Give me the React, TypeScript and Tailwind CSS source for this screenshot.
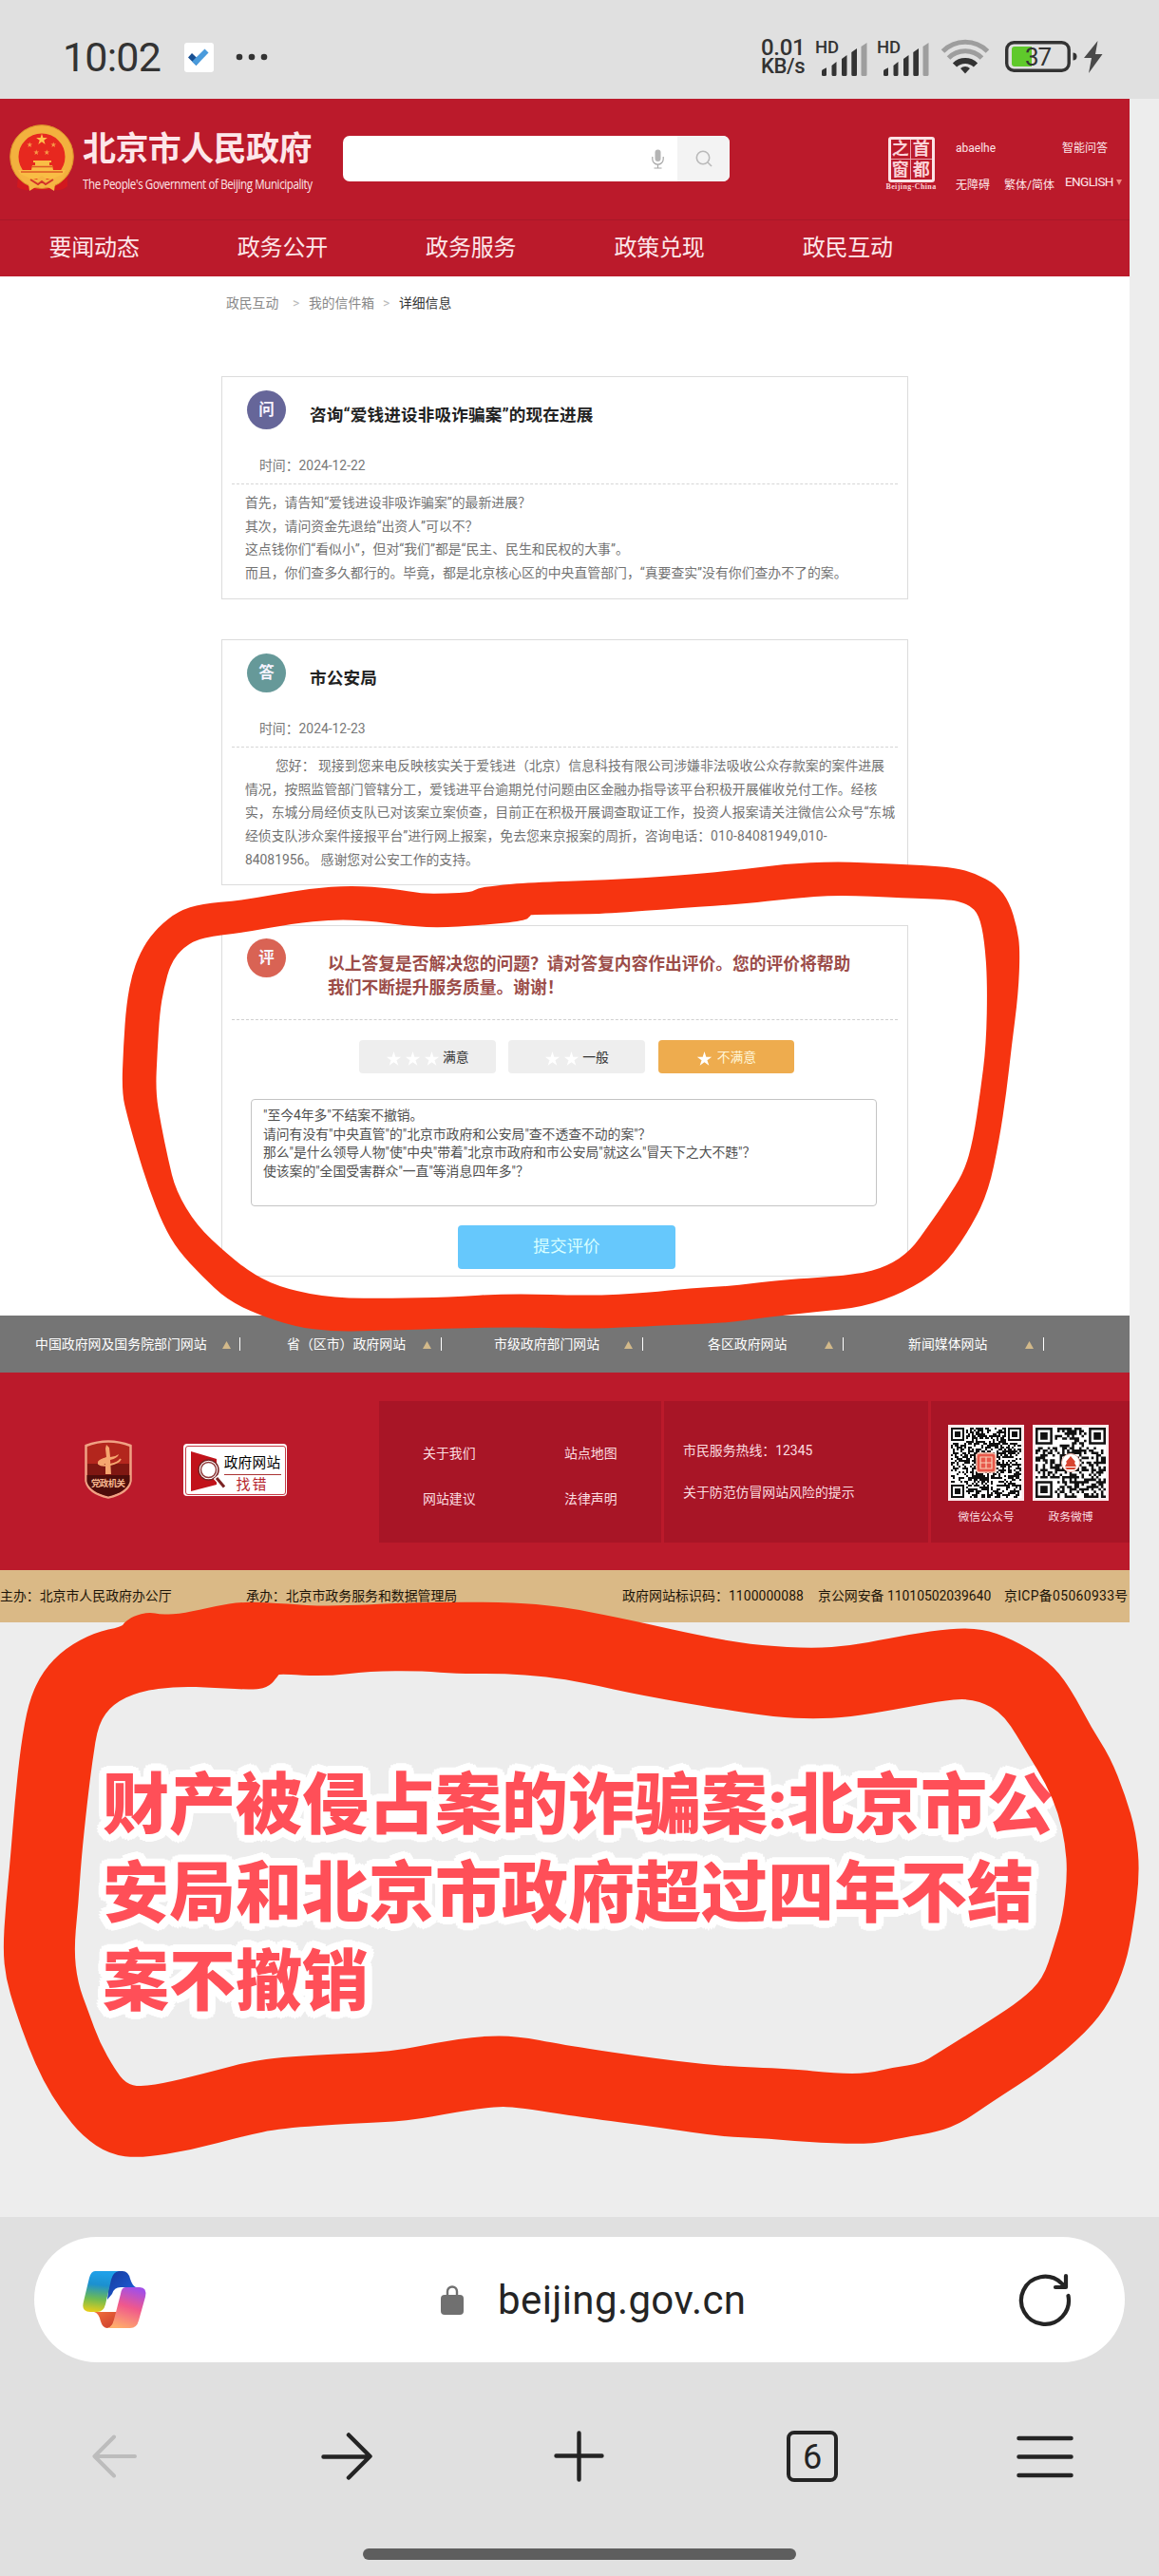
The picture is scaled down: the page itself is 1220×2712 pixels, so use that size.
import React from "react";

type Pt = [number, number];

const STAR = "M12 1.5l2.6 7.9h8.3l-6.7 4.9 2.6 7.9L12 17.3l-6.8 4.9 2.6-7.9L1.1 9.4h8.3z";

/* Smooth closed curve through the midpoints of a point list. */
function smooth(pts: Pt[]): string {
  const mid = (a: Pt, b: Pt): Pt => [(a[0] + b[0]) / 2, (a[1] + b[1]) / 2];
  const start = mid(pts[pts.length - 1], pts[0]);
  let d = `M${start[0]} ${start[1]}`;
  pts.forEach((p, i) => {
    const m = mid(p, pts[(i + 1) % pts.length]);
    d += `Q${p[0]} ${p[1]} ${m[0]} ${m[1]}`;
  });
  return d + "Z";
}

const RING1_OUT: Pt[] = [
  [602, 118], [612, 106], [640, 97], [700, 87], [830, 79], [950, 66], [1040, 50], [1130, 29], [1215, 21], [1310, 28], [1410, 38], [1450, 58], [1487, 95], [1508, 150], [1521, 230], [1526, 300],
  [1523, 440], [1512, 600], [1503, 750], [1491, 900], [1472, 1070], [1436, 1200], [1392, 1310], [1330, 1382], [1260, 1429], [1180, 1444], [1100, 1460],
  [1030, 1479], [952, 1483], [877, 1492], [784, 1497], [680, 1491], [512, 1498], [430, 1504], [368, 1505], [306, 1491], [243, 1452],
  [190, 1405], [148, 1330], [108, 1250], [83, 1170], [58, 1050], [38, 930], [23, 830], [13, 750], [16, 600], [21, 470], [31, 370],
  [49, 290], [74, 228], [108, 178], [148, 154], [210, 145], [270, 125], [330, 107], [400, 96], [470, 107], [520, 123], [560, 122],
];
const RING1_IN: Pt[] = [
  [702, 188], [702, 192], [692, 208], [620, 222], [540, 231], [480, 221], [430, 208], [370, 204], [300, 217], [220, 245], [148, 260], [118, 290], [96, 340], [84, 420],
  [77, 500], [73, 620], [70, 750], [79, 850], [91, 960], [104, 1060], [139, 1170], [190, 1260], [238, 1330], [290, 1372], [370, 1400],
  [470, 1400], [560, 1397], [670, 1385], [800, 1393], [900, 1383], [970, 1368], [1040, 1362], [1120, 1343], [1250, 1327], [1302, 1300],
  [1342, 1250], [1372, 1170], [1402, 1090], [1432, 1000], [1447, 900], [1459, 750], [1469, 600], [1471, 400], [1466, 270], [1457, 190], [1440, 157],
  [1410, 141], [1330, 137], [1220, 126], [1140, 138], [1060, 155], [960, 167], [830, 186], [770, 188],
];
const RING2_OUT: Pt[] = [
  [165, 82], [168, 72], [180, 55], [202, 43], [218, 51], [250, 46], [290, 28], [330, 15], [390, 22], [440, 28], [500, 23], [570, 17], [690, 17], [760, 29], [840, 59],
  [910, 90], [970, 115], [1030, 133], [1100, 140], [1150, 133], [1200, 115], [1260, 93], [1310, 85], [1347, 97], [1392, 140], [1427, 190],
  [1452, 260], [1476, 350], [1502, 430], [1522, 530], [1537, 630], [1542, 740], [1533, 880], [1523, 980], [1502, 1080], [1471, 1160],
  [1411, 1260], [1340, 1350], [1302, 1402], [1270, 1427], [1220, 1443], [1180, 1460], [1110, 1457], [1040, 1446], [970, 1439], [900, 1418],
  [800, 1392], [740, 1375], [700, 1362], [670, 1360], [620, 1374], [550, 1399], [480, 1405], [380, 1418], [330, 1438], [260, 1475],
  [190, 1498], [148, 1487], [112, 1440], [83, 1370], [58, 1290], [38, 1200], [20, 1100], [8, 1020], [4, 940], [8, 820], [14, 700],
  [20, 550], [28, 400], [39, 280], [58, 200], [88, 140], [128, 98],
];
const RING2_IN: Pt[] = [
  [378, 208], [376, 213], [365, 241], [346, 251], [290, 245], [240, 241], [188, 255], [153, 288], [133, 340], [125, 440], [118, 550], [110, 700], [106, 820], [100, 940],
  [105, 1030], [120, 1110], [135, 1190], [155, 1260], [170, 1298], [190, 1308], [230, 1295], [290, 1265], [340, 1239], [380, 1229],
  [440, 1222], [530, 1214], [590, 1190], [650, 1172], [700, 1172], [760, 1195], [860, 1225], [970, 1252], [1070, 1260], [1130, 1272],
  [1175, 1272], [1210, 1255], [1245, 1246], [1267, 1220], [1340, 1130], [1382, 1075], [1411, 1020], [1426, 930], [1438, 850],
  [1444, 740], [1441, 660], [1432, 580], [1415, 500], [1390, 420], [1375, 370], [1360, 325], [1340, 293], [1310, 273], [1270, 281],
  [1210, 303], [1150, 323], [1100, 328], [1050, 323], [970, 300], [870, 266], [790, 232], [740, 215], [680, 207], [620, 208], [570, 200],
  [500, 201], [440, 215],
];

function Scribbles() {
  return (
    <svg className="pointer-events-none absolute inset-0" width="1220" height="2712" viewBox="0 0 1220 2712" fill="#f63410" fillRule="evenodd">
      <path transform="translate(120 900) scale(0.625 0.33333)" d={smooth(RING1_OUT) + smooth(RING1_IN)} />
      <path transform="translate(0 1680) scale(0.7781 0.3954)" d={smooth(RING2_OUT) + smooth(RING2_IN)} />
    </svg>
  );
}

function Signal() {
  return (
    <div className="relative h-[40px] w-[55px] text-[#333]">
      <span className="absolute left-0 top-0 text-[18.5px] font-medium leading-[18px] tracking-[-0.2px]">HD</span>
      <svg className="absolute left-[6px] top-[3px]" width="49" height="37" viewBox="0 0 49 37" fill="#333">
        <path d="M1 34.5V31q0-1 1-1.800l4-2V34.500q0 1.500-1.500 1.500H2.500Q1 36 1 34.500z" />
        <path d="M11.500 34.500V25l5-4V34.500q0 1.500-1.500 1.500h-2q-1.500 0-1.500-1.500zM22 34.500V18l5.500-4V34.500q0 1.500-1.500 1.500h-2.500Q22 36 22 34.500zM32.300 34.500V11l5.700-4V34.500q0 1.500-1.500 1.500h-2.700q-1.500 0-1.500-1.500z" />
        <path fill="#9e9e9e" d="M42.500 34.500V5l6-4V34.500q0 1.500-1.500 1.500h-3q-1.500 0-1.500-1.500z" />
      </svg>
    </div>
  );
}

function StatusBar() {
  return (
    <header className="flex h-[104px] bg-[#e0e0e0] text-[#333]">
      <div className="ml-[66px] mt-[35px] w-[128px] whitespace-nowrap text-[43px] leading-[50px] tracking-[-0.8px]">10:02</div>
      <svg className="mt-[45px]" width="31" height="31" viewBox="0 0 31 31">
        <rect width="31" height="31" rx="3" fill="#fff" />
        <path d="M8 11l-4 4.500 8.500 8.500 4-5z" fill="#174f92" />
        <path d="M12.500 24l-4.300-4.300L21.500 6.500l4 4z" fill="#4a9bdc" />
      </svg>
      <svg className="ml-[23px] mt-[55px]" width="36" height="10" viewBox="0 0 36 10" fill="#333">
        <circle cx="4" cy="5" r="3.300" /><circle cx="17" cy="5" r="3.300" /><circle cx="30" cy="5" r="3.300" />
      </svg>
      <div className="ml-[517px] mt-[40px] w-[57px] whitespace-nowrap font-medium">
        <div className="text-[24px] leading-[20px] tracking-[-0.3px]">0.01</div>
        <div className="text-[22px] leading-[20px] tracking-[-0.4px]">KB/s</div>
      </div>
      <div className="mt-[41px] flex gap-[10px]"><Signal /><Signal /></div>
      <svg className="ml-[12px] mt-[41px]" width="52" height="38" viewBox="0 0 52 38" fill="none" strokeWidth="5">
        <path d="M2.500 13a33 33 0 0 1 47 0" stroke="#9e9e9e" />
        <path d="M8.500 20a24.500 24.500 0 0 1 35 0" stroke="#9e9e9e" />
        <path d="M15 27.500a15.500 15.500 0 0 1 22 0" stroke="#333" strokeWidth="6" />
        <path d="M26 36.500l-5-5.500a7.500 7.500 0 0 1 10 0z" fill="#333" />
      </svg>
      <div className="relative ml-[16px] mt-[43px] h-[34px] w-[76px]">
        <svg width="76" height="34" viewBox="0 0 76 34">
          <rect x="1.700" y="1.700" width="65.500" height="29.500" rx="7.500" fill="none" stroke="#333" strokeWidth="3.400" />
          <path d="M10 6h18v21H10q-3 0-3-3V9q0-3 3-3z" fill="#5fc92b" />
          <path d="M71.500 12.500q4 0 4 4t-4 4z" fill="#333" />
        </svg>
        <span className="absolute left-[21px] top-[3px] text-[26px] leading-[28px] tracking-[-1px]">37</span>
      </div>
      <svg className="ml-[6px] mt-[43px]" width="22" height="34" viewBox="0 0 22 34" fill="#4a4a4a">
        <path d="M15.500 0L1 18h8L6 34 20.500 14H13z" />
      </svg>
    </header>
  );
}

function Emblem() {
  return (
    <svg className="ml-[10px] mt-[27px] shrink-0" width="68" height="72" viewBox="0 0 68 72">
      <path d="M9 54L8 66q6 4 12 3l28 0q8 1 13-4l0-11z" fill="#d2181f" />
      <circle cx="34" cy="34" r="29" fill="#e7281f" stroke="#f3b13e" strokeWidth="9" />
      <circle cx="34" cy="34" r="33.300" fill="none" stroke="#d98c28" strokeWidth="1" />
      <path transform="translate(27.500 9) scale(.54)" d={STAR} fill="#ffc24d" />
      <path transform="translate(18 18) scale(.27)" d={STAR} fill="#f79a47" />
      <path transform="translate(43 18) scale(.27)" d={STAR} fill="#f79a47" />
      <path transform="translate(25 26) scale(.27)" d={STAR} fill="#f79a47" />
      <path transform="translate(36 26) scale(.27)" d={STAR} fill="#f79a47" />
      <path d="M25 38h19v2h-2v3h3l1 5h13q-3 8-13 9H22q-10-1-13-9h14l1-5h3v-3h-2z" fill="#f9bd45" />
      <path d="M12 50h44M23 44.500h22" stroke="#dd5a25" strokeWidth="1.500" />
      <path d="M10 52q12 4 16 8l8-6 8 6q4-4 16-8-2 9-10 11l-1 7-8-5q-5 4-10 0l-8 5-1-7q-8-2-10-11z" fill="#f6b443" />
      <path d="M22 58l8 5 4-3 4 3 8-5" fill="none" stroke="#d2332a" strokeWidth="2" />
    </svg>
  );
}

function Seal() {
  return (
    <div className="ml-[163px] mt-[40px] w-[56px] shrink-0">
      <div className="mx-auto grid h-[48px] w-[49px] grid-cols-2 grid-rows-2 place-items-center rounded-[3px] border-[3px] border-[#fde3e6] font-['Liberation_Serif','Noto_Sans_CJK_SC',serif] text-[18px] font-bold leading-[20px] text-[#fbd3d8]">
        <span className="flex h-full w-full items-center justify-center border-b border-r border-[#f0a5ae]">之</span>
        <span className="flex h-full w-full items-center justify-center border-b border-[#f0a5ae]">首</span>
        <span className="flex h-full w-full items-center justify-center border-r border-[#f0a5ae]">窗</span>
        <span>都</span>
      </div>
      <div className="mt-[1px] whitespace-nowrap text-center font-['Liberation_Serif',serif] text-[8px] font-bold leading-[8px] tracking-[0.4px] text-[#fbd3d8]">Beijing-China</div>
    </div>
  );
}

function SiteHeader() {
  const nav = ["要闻动态", "政务公开", "政务服务", "政策兑现", "政民互动"];
  return (
    <div className="h-[187px] bg-[#bb1a2b] text-[#fde6e9]">
      <div className="flex h-[127px]">
        <Emblem />
        <div className="ml-[9px] mt-[33px] w-[265px] shrink-0 whitespace-nowrap">
          <div className="text-[35px] font-bold leading-[42px] tracking-[-0.6px]">北京市人民政府</div>
          <div className="mt-[6px] origin-left scale-x-[0.85] font-['Open_Sans',sans-serif] text-[13.600px] leading-[18px] tracking-[-0.45px]">The People's Government of Beijing Municipality</div>
        </div>
        <div className="ml-[9px] mt-[39px] flex h-[48px] w-[407px] shrink-0 overflow-hidden rounded-[7px] bg-white">
          <svg className="ml-[325px] mt-[14px]" width="13" height="21" viewBox="0 0 13 21" fill="none" stroke="#a8a8a8" strokeWidth="1.200">
            <rect x="3.500" y="0.600" width="6" height="12.500" rx="3" fill="#b4b4b4" stroke="none" />
            <path d="M.8 8v2.500a5.700 5.700 0 0 0 11.400 0V8M6.500 16v3.500M2.500 20h8" />
          </svg>
          <div className="ml-[14px] flex flex-1 items-center justify-center bg-[#f3f3f3]">
            <svg width="18" height="18" viewBox="0 0 18 18" fill="none" stroke="#b9b9b9" strokeWidth="1.600">
              <circle cx="8" cy="8" r="6.700" /><path d="M13 13l4 4" />
            </svg>
          </div>
        </div>
        <Seal />
        <div className="ml-[19px] mt-[43px] w-[183px] shrink-0 whitespace-nowrap text-[12px] leading-[18px]">
          <div className="flex">
            <span className="w-[112px]">abaelhe</span><span>智能问答</span>
          </div>
          <div className="mt-[17px] flex">
            <span className="mt-[4px] w-[51px]">无障碍</span>
            <span className="mt-[4px] w-[64px]">繁体/简体</span>
            <span className="w-[54px] text-[13.500px] tracking-[-0.6px]">ENGLISH</span>
            <svg className="mt-[7px]" width="6" height="6" viewBox="0 0 6 6"><path d="M0 0h6L3 6z" fill="#f08a80" /></svg>
          </div>
        </div>
      </div>
      <nav className="flex h-[60px] border-t border-[#a81828] text-[24px]">
        {nav.map((n) => (
          <div key={n} className="w-[198.300px] pl-[51.500px] leading-[59px] tracking-[-0.2px]">{n}</div>
        ))}
      </nav>
    </div>
  );
}

function Dot({ children, color }: { children: string; color: string }) {
  return (
    <div className={"flex h-[41px] w-[41px] shrink-0 items-center justify-center rounded-full text-[16.500px] font-bold leading-[20px] text-[#f6f3ff] " + color}>
      {children}
    </div>
  );
}

function Post({ dot, color, title, date, className, children }: { dot: string; color: string; title: string; date: string; className: string; children: React.ReactNode }) {
  return (
    <section className={"ml-[233px] w-[723px] border border-[#dcdcdc] px-[10px] pt-[14px] " + className}>
      <div className="flex h-[54px] pl-[16px]">
        <Dot color={color}>{dot}</Dot>
        <h2 className="ml-[25px] mt-[13px] whitespace-nowrap text-[17.600px] font-bold leading-[26px] tracking-[0.150px] text-[#222]">{title}</h2>
      </div>
      <div className="mt-[14px] h-[31px] border-b border-dashed border-[#d6d6d6] pl-[29px] text-[13.870px] leading-[22px] text-[#777]">时间：{date}</div>
      <div className="mt-[7px] whitespace-nowrap pl-[14px] text-[13.870px] leading-[24.700px] text-[#727272]">{children}</div>
    </section>
  );
}

function Stars({ n }: { n: number }) {
  return (
    <>
      {Array.from({ length: n }, (_, i) => (
        <svg key={i} className="mr-[3px] mt-[4px]" width="17" height="17" viewBox="0 0 24 24"><path d={STAR} fill="#fff" /></svg>
      ))}
    </>
  );
}

function Review() {
  const btn = "flex h-[35px] w-[143.500px] items-center justify-center rounded-[4px] text-[13.800px] leading-[20px] ";
  return (
    <section className="ml-[233px] mt-[42px] h-[370px] w-[723px] border border-[#dcdcdc] px-[10px] pt-[13px]">
      <div className="flex h-[86px] border-b border-dashed border-[#d0d0d0] pl-[16px]">
        <Dot color="bg-[#d96354]">评</Dot>
        <p className="ml-[44px] mt-[15px] whitespace-nowrap text-[17.750px] font-bold leading-[25px] text-[#9b4c48]">
          以上答复是否解决您的问题？请对答复内容作出评价。您的评价将帮助<br />我们不断提升服务质量。谢谢！
        </p>
      </div>
      <div className="mt-[21px] flex gap-[13.800px] pl-[134px]">
        <div className={btn + "bg-[#eeeeee] text-[#333]"}><Stars n={3} />满意</div>
        <div className={btn + "bg-[#eeeeee] text-[#333]"}><Stars n={2} />一般</div>
        <div className={btn + "bg-[#eeac4e] text-[#fff6d8]"}><Stars n={1} /><span className="ml-[2px]">不满意</span></div>
      </div>
      <div className="ml-[20px] mt-[27px] h-[113px] w-[659px] whitespace-nowrap rounded-[4px] border-[1.500px] border-[#c4c4c4] pl-[12px] pt-[7px] text-[13.800px] leading-[19.700px] text-[#505050]">
        <p>"至今4年多"不结案不撤销。</p>
        <p>请问有没有"中央直管"的"北京市政府和公安局"查不透查不动的案"？</p>
        <p>那么"是什么领导人物"使"中央"带着"北京市政府和市公安局"就这么"冒天下之大不韪"？</p>
        <p>使该案的"全国受害群众"一直"等消息四年多"？</p>
      </div>
      <div className="ml-[238px] mt-[20px] h-[46px] w-[229px] rounded-[4px] bg-[#66c8fc] text-center text-[17.600px] leading-[44px] text-[#d8ffff]">提交评价</div>
    </section>
  );
}

/* Deterministic module pattern with the three finder squares. */
function Qr({ n, seed, children }: { n: number; seed: number; children: React.ReactNode }) {
  let s = seed;
  const rnd = () => ((s = (s * 1103515245 + 12345) % 2147483648) / 2147483648);
  let d = "";
  const inFinder = (x: number, y: number) => (x < 8 && y < 8) || (x >= n - 8 && y < 8) || (x < 8 && y >= n - 8);
  for (let y = 0; y < n; y++) for (let x = 0; x < n; x++) {
    const on = rnd() > 0.48;
    if (on && !inFinder(x, y)) d += `M${x} ${y}h1v1h-1z`;
  }
  for (const [x, y] of [[0, 0], [n - 7, 0], [0, n - 7]])
    d += `M${x} ${y}h7v7h-7zM${x + 1} ${y + 1}v5h5v-5zM${x + 2} ${y + 2}h3v3h-3z`;
  return (
    <svg width="80" height="80" viewBox="0 0 80 80">
      <rect width="80" height="80" fill="#fde8ea" />
      <rect x="2.500" y="2.500" width="75" height="75" fill="#fff" />
      <path transform={`translate(3 3) scale(${74 / n})`} d={d} fill="#111" />
      {children}
    </svg>
  );
}

function Footer() {
  const links: [string, string, string][] = [
    ["中国政府网及国务院部门网站", "w-[253px] pl-[37px]", "w-[197px]"],
    ["省（区市）政府网站", "w-[212px] pl-[49px]", "w-[143px]"],
    ["市级政府部门网站", "w-[212px] pl-[55px]", "w-[137px]"],
    ["各区政府网站", "w-[211px] pl-[68px]", "w-[123px]"],
    ["新闻媒体网站", "w-[211px] pl-[68px]", "w-[123px]"],
  ];
  return (
    <footer className="text-[13.900px] leading-[20px]">
      <div className="flex h-[60px] items-center whitespace-nowrap bg-[#757575] text-white">
        {links.map(([t, cell, w]) => (
          <div key={t} className={"flex items-center " + cell}>
            <span className={"shrink-0 " + w}>{t}</span>
            <svg className="mt-[1px] shrink-0" width="9" height="8" viewBox="0 0 9 8"><path d="M0 8h9L4.500 0z" fill="#d2b98a" /></svg>
            <span className="ml-auto h-[14px] w-[1.500px] bg-white" />
          </div>
        ))}
      </div>
      <div className="flex h-[208px] bg-[#bb1a2b] text-[#fbdde0]">
        <svg className="ml-[89px] mt-[71px] shrink-0" width="50" height="62" viewBox="0 0 50 62">
          <path d="M1.500 6Q25-3 48.500 6V43Q46 56 25 60.500 4 56 1.500 43z" fill="#b3261d" stroke="#f0a184" strokeWidth="2.500" />
          <path d="M2.500 37h45v7Q44 55 25 59.500 6 55 2.500 44z" fill="#4d0d0b" />
          <path d="M3 25h44v12H3z" fill="#7f1712" />
          <path d="M22 36h6l-1-15q8-2 9-6-4 3-9 3l-1-10-3-3-1 4 1 9q-10 3-9 7 3 3 8 0z" fill="#f5a66f" />
          <path d="M23 20q-9 1-8 5 3 3 12 1 9-2 11-6" fill="none" stroke="#f5a66f" strokeWidth="1.800" />
          <text x="25" y="49" textAnchor="middle" fontSize="9.500" fontWeight="700" fill="#f7b78f" textLength="36">党政机关</text>
        </svg>
        <div className="ml-[54px] mt-[75px] h-[55px] w-[109px] shrink-0 rounded-[4px] bg-white p-[1.500px]">
          <div className="flex h-full w-full rounded-[3px] border border-[#c63a46]">
            <svg className="ml-[4px] mt-[4px] shrink-0" width="38" height="44" viewBox="0 0 38 44">
              <path d="M1 1l27 8v27L1 43z" fill="#c1121a" />
              <circle cx="19.500" cy="20.500" r="10.500" fill="#fff" stroke="#7a2222" strokeWidth="1.500" />
              <circle cx="19.500" cy="20.500" r="8" fill="#fff" stroke="#8f3a3a" strokeWidth="1.500" />
              <path d="M27 28l10 11" stroke="#fff" strokeWidth="6" /><path d="M28 29l8 9.500" stroke="#7a2222" strokeWidth="3" />
            </svg>
            <div className="-ml-[2px] mt-[8px] w-[60px] whitespace-nowrap text-center text-[14.700px] leading-[18px] text-black">
              <div className="tracking-[0.200px]">政府网站</div>
              <div className="mt-[3px] border-t border-[#a33] pt-[1px] text-[15px] tracking-[2px] text-[#b5232b]">找错</div>
            </div>
          </div>
        </div>
        <div className="ml-[97px] mt-[30px] flex h-[149px] w-[790px] shrink-0 gap-[3px] whitespace-nowrap">
          <div className="grid w-[297px] shrink-0 grid-cols-[149px_100px] content-start gap-y-[28px] bg-[#a81526] pl-[46px] pt-[45px]">
            <span>关于我们</span><span>站点地图</span><span>网站建议</span><span>法律声明</span>
          </div>
          <div className="w-[278px] shrink-0 bg-[#a81526] pl-[20px] pt-[42px]">
            <div>市民服务热线：12345</div>
            <div className="mt-[24px]">关于防范仿冒网站风险的提示</div>
          </div>
          <div className="flex w-[209px] shrink-0 gap-[9px] bg-[#a81526] pl-[18px] pt-[25px] text-center text-[11.800px] leading-[16px]">
            <div>
              <Qr n={37} seed={71}>
                <rect x="30" y="30" width="20" height="20" rx="3" fill="#e8584a" stroke="#f2b9a8" strokeWidth="1.500" />
                <path d="M34 34h12v12H34zM40 34v12M34 40h12" fill="none" stroke="#f9d0b8" strokeWidth="1.200" />
              </Qr>
              <div className="mt-[9px]">微信公众号</div>
            </div>
            <div>
              <Qr n={29} seed={913}>
                <circle cx="40" cy="40" r="9.500" fill="#fff" stroke="#eeb8ac" />
                <path d="M34 44l2-4-1-1 5-6 5 6-1 1 2 4zM34 45h12l-2 2h-8z" fill="#d8432f" />
              </Qr>
              <div className="mt-[9px]">政务微博</div>
            </div>
          </div>
        </div>
      </div>
      <div className="flex h-[55px] overflow-hidden whitespace-nowrap bg-[#dab986] leading-[55px] text-[#1c1408]">
        <span className="w-[259px] shrink-0">主办：北京市人民政府办公厅</span>
        <span className="w-[396px] shrink-0">承办：北京市政务服务和数据管理局</span>
        <span className="w-[206px] shrink-0 tracking-[0.100px]">政府网站标识码：1100000088</span>
        <span className="w-[196px] shrink-0">京公网安备 11010502039640</span>
        <span className="shrink-0 tracking-[0.350px]">京ICP备05060933号</span>
      </div>
    </footer>
  );
}

function BrowserBar() {
  return (
    <div className="absolute inset-x-0 bottom-0 h-[378px] bg-[#e0e0e0] px-[36px] pt-[21px]">
      <div className="flex h-[132px] items-center rounded-[66px] bg-white pl-[50px] pr-[55px]">
        <svg className="shrink-0" width="70" height="64" viewBox="0 0 70 64">
          <defs>
            <linearGradient id="cpA" x1=".1" y1="0" x2="0" y2="1"><stop offset="0" stopColor="#1fa0e8" /><stop offset=".3" stopColor="#1c90cf" /><stop offset=".65" stopColor="#6fbb52" /><stop offset="1" stopColor="#f3cf15" /></linearGradient>
            <linearGradient id="cpB" x1=".6" y1="0" x2=".3" y2="1"><stop offset="0" stopColor="#a34fe6" /><stop offset=".45" stopColor="#f0588c" /><stop offset="1" stopColor="#ffae6b" /></linearGradient>
            <linearGradient id="cpC" x1="0" y1="0" x2="1" y2="1"><stop offset="0" stopColor="#163a9c" /><stop offset="1" stopColor="#1f62e0" /></linearGradient>
            <linearGradient id="cpD" x1="0" y1="0" x2="1" y2="1"><stop offset="0" stopColor="#f2703a" /><stop offset="1" stopColor="#c93a2e" /></linearGradient>
          </defs>
          <path d="M30 2H43q6 0 8 8 2 7 6 9H41Q34 19 32 26L27 32z" fill="url(#cpC)" />
          <path d="M13 45H38L34 55Q32 62 27 62 22 62 20 55 18 46 13 45z" fill="url(#cpD)" />
          <path d="M14 2H39Q33 3 31 11L25 37Q23 45 16 45H9Q-1 45 2 34L8 9Q10 2 14 2z" fill="url(#cpA)" />
          <path d="M46 19H61Q69 19 67 29L60 54Q58 62 51 62H27Q32 61 34 53L41 26Q42 19 46 19z" fill="url(#cpB)" />
        </svg>
        <svg className="ml-[308px] shrink-0" width="24" height="31" viewBox="0 0 24 31">
          <rect y="10" width="24" height="21" rx="4" fill="#707070" /><path d="M7 11V6.500a5 5 0 0 1 10 0V11" fill="none" stroke="#707070" strokeWidth="2.400" />
        </svg>
        <div className="ml-[36px] mt-[2px] w-[549px] text-[42px] leading-[50px] tracking-[0.400px] text-[#242424]">beijing.gov.cn</div>
        <svg className="shrink-0" width="58" height="58" viewBox="0 0 58 58" fill="none" stroke="#242424" strokeWidth="4.200" strokeLinecap="round" strokeLinejoin="round">
          <path d="M53.500 25A25 25 0 1 1 46 11.500L50 15M51 4v12H40" />
        </svg>
      </div>
      <div className="relative mt-[71px] flex h-[56px] items-center">
        <svg className="ml-[61px]" width="48" height="46" viewBox="0 0 48 46" fill="none" stroke="#bcbcbc" strokeWidth="4" strokeLinecap="round" strokeLinejoin="round"><path d="M45 23H3M23 2.500L2.500 23 23 43.500" /></svg>
        <svg className="ml-[193px]" width="54" height="50" viewBox="0 0 54 50" fill="none" stroke="#242424" strokeWidth="4.500" strokeLinecap="round" strokeLinejoin="round"><path d="M2.500 25.500h48M29 2.500L51.500 25 29 47.500" /></svg>
        <svg className="ml-[191px]" width="53" height="54" viewBox="0 0 53 54" fill="none" stroke="#242424" strokeWidth="4.400" strokeLinecap="round"><path d="M2.500 26.500h48M26.500 2.500v49" /></svg>
        <div className="ml-[192px] flex h-[54px] w-[54px] items-center justify-center rounded-[8px] border-[4.500px] border-[#242424] pt-[2px] text-[36px] leading-[40px] text-[#242424]">6</div>
        <svg className="ml-[188px]" width="60" height="46" viewBox="0 0 60 46" stroke="#242424" strokeWidth="4.500" strokeLinecap="round"><path d="M2.500 4h55M2.500 23.500h55M2.500 43h55" /></svg>
      </div>
      <div className="mx-auto mt-[69px] h-[12px] w-[456px] rounded-full bg-[#5e5e5e]" />
    </div>
  );
}

export default function App() {
  return (
    <div className="relative h-[2712px] w-[1220px] overflow-hidden bg-[#ededed] font-['Roboto','Noto_Sans_CJK_SC',sans-serif]">
      <StatusBar />
      <main className="h-[1604px] w-[1188.500px] bg-white">
        <SiteHeader />
        <div className="flex h-[105px] whitespace-nowrap pl-[238px] pt-[18px] text-[13.800px] leading-[20px] text-[#888]">
          <span className="w-[70px]">政民互动</span><span className="w-[17px] text-[#bbb]">&gt;</span>
          <span className="w-[78px]">我的信件箱</span><span className="w-[17px] text-[#bbb]">&gt;</span>
          <span className="text-[#333]">详细信息</span>
        </div>
        <Post dot="问" color="bg-[#666699]" title="咨询“爱钱进设非吸诈骗案”的现在进展" date="2024-12-22" className="h-[235px]">
          <p>首先，请告知“爱钱进设非吸诈骗案”的最新进展？</p>
          <p>其次，请问资金先退给“出资人”可以不？</p>
          <p>这点钱你们“看似小”，但对“我们”都是“民主、民生和民权的大事”。</p>
          <p>而且，你们查多久都行的。毕竟，都是北京核心区的中央直管部门，“真要查实”没有你们查办不了的案。</p>
        </Post>
        <Post dot="答" color="bg-[#669999]" title="市公安局" date="2024-12-23" className="mt-[42px] h-[259px]">
          <p className="pl-[32px]">您好： 现接到您来电反映核实关于爱钱进（北京）信息科技有限公司涉嫌非法吸收公众存款案的案件进展</p>
          <p>情况，按照监管部门管辖分工，爱钱进平台逾期兑付问题由区金融办指导该平台积极开展催收兑付工作。经核</p>
          <p>实，东城分局经侦支队已对该案立案侦查，目前正在积极开展调查取证工作，投资人报案请关注微信公众号“东城</p>
          <p>经侦支队涉众案件接报平台”进行网上报案，免去您来京报案的周折，咨询电话：<span className="tracking-[0.200px]">010-84081949,010-</span></p>
          <p>84081956。 感谢您对公安工作的支持。</p>
        </Post>
        <Review />
        <div className="h-[41px]" />
        <Footer />
      </main>
      <div className="ml-[108px] mt-[147px] whitespace-nowrap text-[70px] font-black leading-[92.900px] text-[#ff4f58] [text-shadow:8px_0_0_#fff,7.400px_3px_0_#fff,5.700px_5.700px_0_#fff,3px_7.400px_0_#fff,0_8px_0_#fff,-3px_7.400px_0_#fff,-5.700px_5.700px_0_#fff,-7.400px_3px_0_#fff,-8px_0_0_#fff,-7.400px_-3px_0_#fff,-5.700px_-5.700px_0_#fff,-3px_-7.400px_0_#fff,0_-8px_0_#fff,3px_-7.400px_0_#fff,5.700px_-5.700px_0_#fff,7.400px_-3px_0_#fff,4px_0_0_#fff,-4px_0_0_#fff,0_4px_0_#fff,0_-4px_0_#fff]">
        <p>财产被侵占案的诈骗案:北京市公</p>
        <p>安局和北京市政府超过四年不结</p>
        <p>案不撤销</p>
      </div>
      <Scribbles />
      <BrowserBar />
    </div>
  );
}
